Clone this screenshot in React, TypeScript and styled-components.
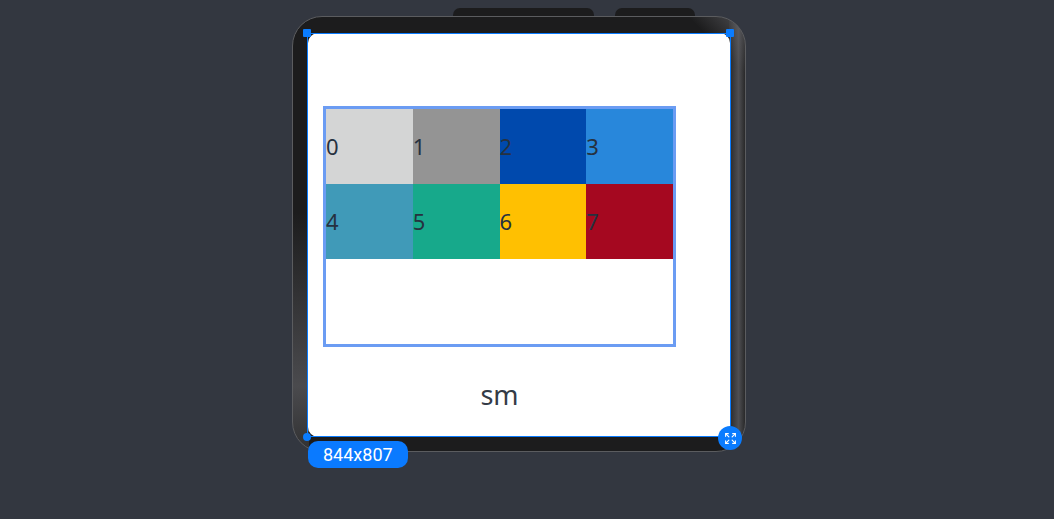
import React from "react";
import styled, { createGlobalStyle } from "styled-components";
import { Expand } from "lucide-react";

const Global = createGlobalStyle`
  html, body { margin: 0; padding: 0; background: #333740; }
  body { width: 1054px; height: 519px; overflow: hidden; font-family: "Noto Sans", Inter, sans-serif; }
`;

const Page = styled.div`
  padding: 8px 0 0 292px;
`;

const Device = styled.div`
  position: relative;
  width: 454px;
`;

const SideButtons = styled.div`
  display: flex;
  gap: 21px;
  padding-left: 161px;
  height: 8px;
`;

const SideButton = styled.div<{ $w: number }>`
  width: ${(p) => p.$w}px;
  height: 8px;
  background: #1c1c1d;
  border-radius: 7px 7px 0 0;
`;

const Frame = styled.div`
  box-sizing: border-box;
  width: 454px;
  height: 436px;
  border: 1px solid #5b5c5f;
  border-radius: 30px;
  padding: 16px 15px 14px 15px;
  background:
    linear-gradient(180deg, rgba(28,28,29,0) 0%, rgba(28,28,29,0) 45%, rgba(90,90,94,0.75) 85%, rgba(70,70,72,0.5) 100%) left top / 16px 100% no-repeat,
    linear-gradient(90deg, rgba(80,80,84,0.2) 0%, rgba(100,100,104,0.7) 60%, rgba(60,60,62,0.4) 100%) right top / 16px 100% no-repeat,
    linear-gradient(225deg, rgba(110,110,115,0.6) 0px, rgba(28,28,29,0) 40px) right top / 60px 60px no-repeat,
    #1c1c1d;
`;

const ScreenArea = styled.div`
  position: relative;
  width: 423px;
  height: 404px;
`;

const Screen = styled.div`
  box-sizing: border-box;
  width: 422px;
  height: 404px;
  background: #ffffff;
  border-radius: 10px;
  padding: 73px 0 0 15px;
  display: flex;
  flex-direction: column;
`;

const Outline = styled.div`
  position: absolute;
  inset: 0 0 0 -1px;
  border: 1px solid #0a7cff;
  pointer-events: none;
`;

const Handle = styled.div<{ $x: string; $y: string; $round?: boolean }>`
  position: absolute;
  width: 8px;
  height: 8px;
  background: #0a7cff;
  border-radius: ${(p) => (p.$round ? "50%" : "1px")};
  left: ${(p) => p.$x};
  top: ${(p) => p.$y};
`;

const ResizeBtn = styled.div`
  position: absolute;
  left: 410px;
  top: 393px;
  width: 24px;
  height: 24px;
  border-radius: 50%;
  background: #0a7cff;
  display: flex;
  align-items: center;
  justify-content: center;
  color: #fff;
`;

const GridBox = styled.div`
  box-sizing: border-box;
  width: 353px;
  height: 241px;
  border: 3px solid #6b9cf3;
`;

const Grid = styled.div`
  display: grid;
  grid-template-columns: repeat(4, 1fr);
  grid-auto-rows: 75px;
`;

const Cell = styled.div<{ $bg: string }>`
  background: ${(p) => p.$bg};
  display: flex;
  align-items: center;
  padding-bottom: 2px;
  font-size: 22px;
  color: #26313f;
  font-family: "Noto Sans", sans-serif;
  line-height: 1;
`;

const SizeLabel = styled.div`
  width: 353px;
  text-align: center;
  margin-top: 30px;
  font-size: 27px;
  color: #343b46;
  font-family: "Noto Sans", sans-serif;
  line-height: 36px;
`;

const Pill = styled.div`
  position: absolute;
  left: 16px;
  top: 433px;
  height: 27px;
  padding: 0 15px;
  border-radius: 10px;
  background: #0a7aff;
  color: #fff;
  font-family: Roboto, "Liberation Sans", sans-serif;
  font-size: 18px;
  display: flex;
  align-items: center;
`;

const colors = ["#d4d5d5", "#949494", "#0049ad", "#2887db", "#409ab8", "#17a98b", "#ffc001", "#a50820"];

export default function App() {
  return (
    <>
      <Global />
      <Page>
        <Device>
          <SideButtons>
            <SideButton $w={141} />
            <SideButton $w={80} />
          </SideButtons>
          <Frame>
            <ScreenArea>
              <Screen>
                <GridBox>
                  <Grid>
                    {colors.map((c, i) => (
                      <Cell key={i} $bg={c}>{i}</Cell>
                    ))}
                  </Grid>
                </GridBox>
                <SizeLabel>sm</SizeLabel>
              </Screen>
              <Outline />
              <Handle $x="-5px" $y="-4px" />
              <Handle $x="418px" $y="-4px" />
              <Handle $x="-5px" $y="400px" $round />
              <ResizeBtn>
                <Expand size={13} strokeWidth={2} />
              </ResizeBtn>
            </ScreenArea>
          </Frame>
          <Pill>844x807</Pill>
        </Device>
      </Page>
    </>
  );
}
